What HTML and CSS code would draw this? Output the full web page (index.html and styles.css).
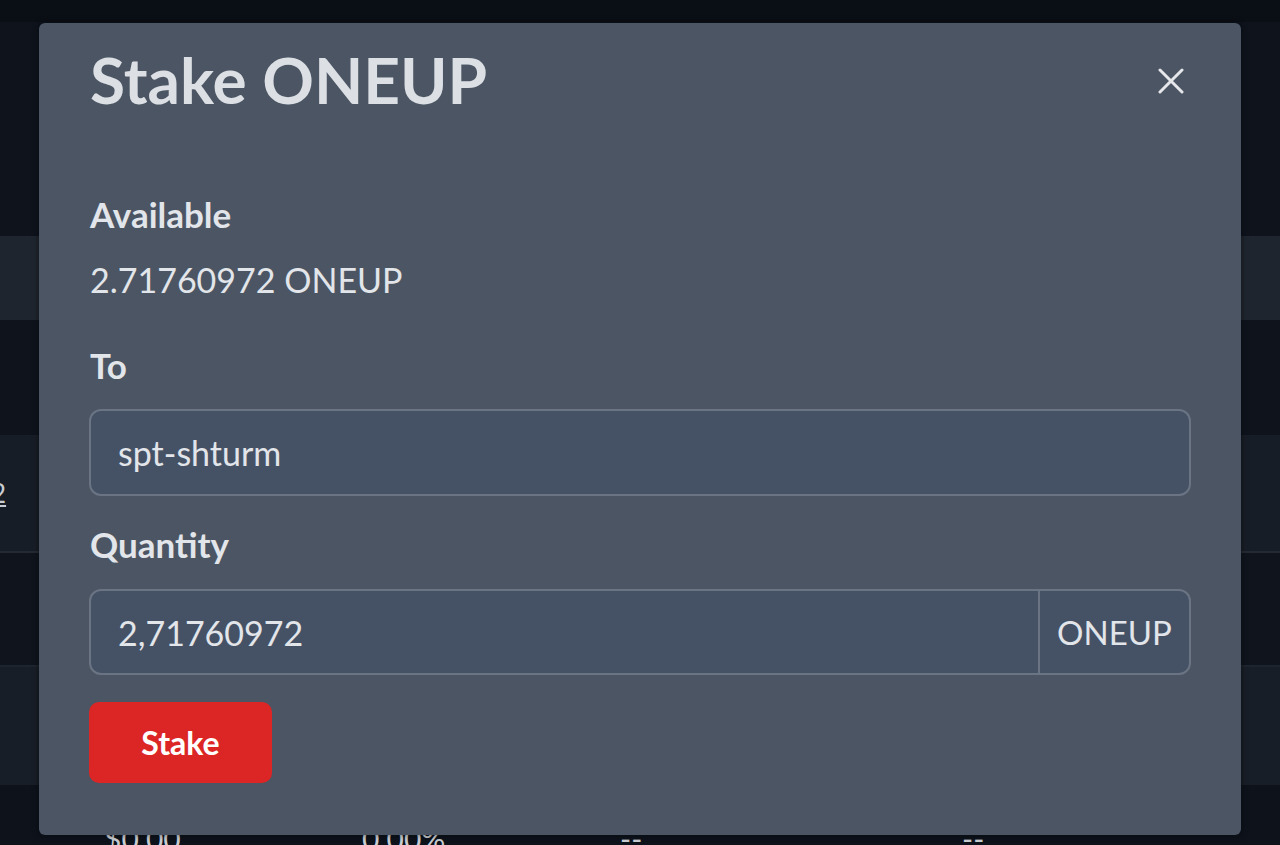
FILE: index.html
```html
<!DOCTYPE html>
<html lang="en">
<head>
<meta charset="utf-8">
<title>Stake ONEUP</title>
<link rel="stylesheet" href="styles.css">
</head>
<body>
<div class="page">
  <div class="topbar"></div>
  <div class="spacer"></div>
  <div class="row row-a"></div>
  <div class="row row-b"></div>
  <div class="row row-c"><a class="cut-link" href="#">2</a></div>
  <div class="row row-d"></div>
  <div class="row row-e"></div>
  <div class="row row-f">
    <span class="cell c1">$0.00</span>
    <span class="cell c2">0.00%</span>
    <span class="cell c3">--</span>
    <span class="cell c4">--</span>
  </div>
</div>

<div class="modal">
  <div class="modal-header">
    <h2 class="modal-title">Stake ONEUP</h2>
    <button class="close" aria-label="Close">
      <svg viewBox="0 0 26 26" width="26" height="26"><path d="M2 2 L24 24 M24 2 L2 24" stroke="currentColor" stroke-width="3" stroke-linecap="round" fill="none"/></svg>
    </button>
  </div>
  <div class="modal-body">
    <div class="label first">Available</div>
    <div class="value">2.71760972 ONEUP</div>
    <div class="label to">To</div>
    <div class="field">
      <span class="field-text">spt-shturm</span>
    </div>
    <div class="label qty">Quantity</div>
    <div class="field group">
      <span class="field-text grow">2,71760972</span>
      <span class="addon">ONEUP</span>
    </div>
    <button class="stake">Stake</button>
  </div>
</div>
</body>
</html>
```

FILE: styles.css
```css
* { box-sizing: border-box; }
html, body {
  margin: 0;
  padding: 0;
  width: 1280px;
  height: 845px;
  overflow: hidden;
  background: #0d121b;
  font-family: Lato, "Noto Sans", sans-serif;
}
.page {
  display: flex;
  flex-direction: column;
  height: 845px;
}
.topbar { height: 22px; background: #0a0e15; flex: none; }
.spacer { height: 214px; background: #0e131c; flex: none; }
.row { flex: none; display: flex; align-items: center; }
.row-a { height: 84px; background: #1f252e; }
.row-b { height: 115px; background: #0e131c; }
.row-c { height: 118px; background: #171d26; border-bottom: 2px solid #242a33; }
.row-d { height: 112px; background: #0f141d; }
.row-e { height: 120px; background: #181e27; border-top: 2px solid #1e242d; }
.row-f { height: 60px; background: #0d121b; align-items: flex-start; padding-top: 38px; }
.cut-link {
  color: #c9ccd1;
  font-size: 26px;
  margin-left: -9px;
  text-decoration: underline;
}
.cell { color: #c9ccd1; font-size: 30px; line-height: 30px; }
.c1 { margin-left: 104px; width: 258px; }
.c2 { width: 258px; }
.c3 { width: 342px; }
.c4 { width: 200px; }

.modal {
  position: absolute;
  left: 39px;
  top: 23px;
  width: 1202px;
  height: 812px;
  background: #4b5563;
  border-radius: 6px;
  box-shadow: 0 0 6px rgba(0,0,0,0.5);
  padding: 0 50px;
  color: #e2e5e9;
}
.modal-header {
  height: 116px;
  display: flex;
  align-items: center;
  justify-content: space-between;
}
.modal-title {
  margin: -3px 0 0 1px;
  font-size: 64px;
  font-weight: 700;
  line-height: 1;
  color: #dcdfe4;
}
.close {
  background: none;
  border: 0;
  padding: 0;
  color: #e5e7eb;
  width: 26px;
  height: 26px;
  margin-right: 7px;
  display: flex;
}
.modal-body { display: flex; flex-direction: column; align-items: flex-start; }
.label {
  font-size: 35px;
  font-weight: 700;
  line-height: 40px;
  height: 40px;
  padding-left: 1px;
}
.label.first { margin-top: 55px; }
.value {
  margin-top: 26px;
  font-size: 34px;
  line-height: 40px;
  height: 40px;
  padding-left: 1px;
}
.label.to { margin-top: 45px; }
.label.qty { margin-top: 28px; }
.field {
  margin-top: 24px;
  width: 1102px;
  height: 87px;
  background: #455266;
  border: 2px solid #6b7483;
  border-radius: 12px;
  display: flex;
  align-items: center;
  overflow: hidden;
}
.field.group { margin-top: 25px; height: 86px; }
.field-text {
  padding-left: 27px;
  font-size: 34px;
  color: #e2e5e9;
}
.grow { flex: 1; }
.addon {
  align-self: stretch;
  display: flex;
  align-items: center;
  justify-content: center;
  width: 151px;
  border-left: 2px solid #6b7483;
  font-size: 33px;
  color: #e2e5e9;
}
.stake {
  margin-top: 27px;
  width: 183px;
  height: 81px;
  background: #dc2626;
  border: 0;
  border-radius: 10px;
  color: #ffffff;
  font-family: Lato, "Noto Sans", sans-serif;
  font-size: 32px;
  font-weight: 700;
}
```
